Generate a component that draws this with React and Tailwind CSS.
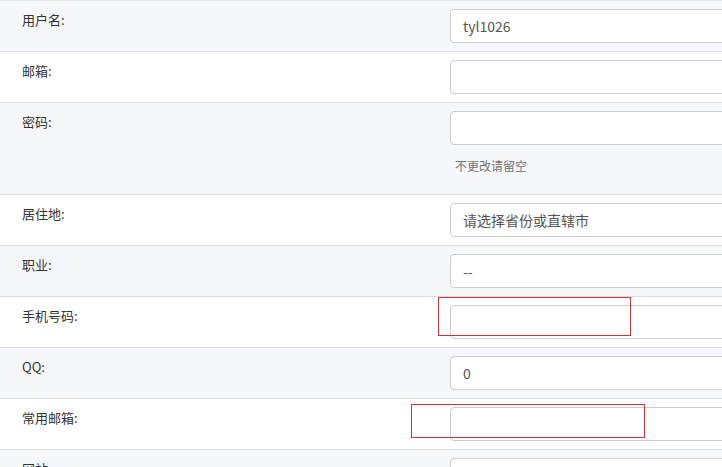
import React from 'react';

const font = { fontFamily: '"Noto Sans CJK SC", "Liberation Sans", sans-serif' };

const rows = [
  { label: '用户名:', value: 'tyl1026' },
  { label: '邮箱:', value: '' },
  { label: '密码:', value: '', help: '不更改请留空' },
  { label: '居住地:', value: '请选择省份或直辖市' },
  { label: '职业:', value: '--' },
  { label: '手机号码:', value: '' },
  { label: 'QQ:', value: '0' },
  { label: '常用邮箱:', value: '' },
  { label: '网站:', value: '' },
];

const Row = ({ label, value, help, striped }) => (
  <div className={`flex border-b border-[#dedede] ${striped ? 'bg-[#f5f7fa]' : 'bg-white'}`}>
    <div className="w-[450px] shrink-0 pl-[22px] pt-[9px] text-[13px] leading-[20px] text-[#333]">{label}</div>
    <div className={`w-[400px] shrink-0 pt-2 ${help ? 'pb-[20px]' : 'pb-2'}`}>
      <div className="h-[34px] rounded-[4px] border border-[#cccccc] bg-white pl-3 flex items-center text-[14px] text-[#555]">
        {value}
      </div>
      {help && <div className="mt-[12px] pl-[5px] text-[12px] leading-[17px] text-[#737373]">{help}</div>}
    </div>
  </div>
);

export default function App() {
  return (
    <div className="relative w-full h-[467px] overflow-hidden bg-white" style={font}>
      <div className="border-t border-[#e8e8e8]">
        {rows.map((r, i) => (
          <Row key={r.label} {...r} striped={i % 2 === 0} />
        ))}
      </div>
      {/* annotation boxes */}
      <div className="absolute left-[438px] top-[297px] w-[193px] h-[39px] border border-[#d0343c]" />
      <div className="absolute left-[411px] top-[404px] w-[234px] h-[34px] border border-[#d0343c]" />
    </div>
  );
}
